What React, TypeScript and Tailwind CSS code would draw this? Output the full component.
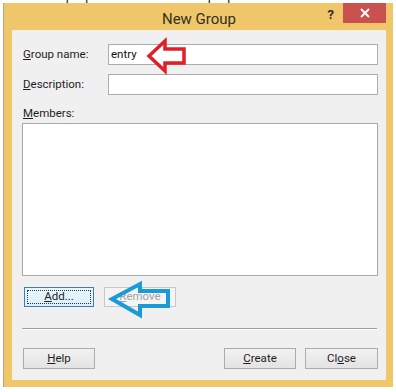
export default function App() {
	return (
		<div className="relative w-[396px] h-[392px] overflow-hidden bg-white font-['Roboto',sans-serif] text-[11.5px] text-[#1e1e1e]">
			{/* window behind, mostly hidden */}
			<div className="h-[3px] overflow-hidden pl-[30px]">
				<div className="-mt-[11px] text-[13px] leading-[14px] text-[#222] whitespace-nowrap">
					Backup Operators &nbsp;&nbsp;&nbsp;&nbsp;&nbsp;&nbsp;&nbsp;&nbsp;&nbsp;&nbsp; Backup Operators can override
				</div>
			</div>

			{/* dialog frame */}
			<div className="mx-[3px] bg-[#efc76a] pl-[8px] pr-[7px] pb-[7px] border-l border-[#b9a57a]">
				<div className="h-[27px] flex items-start">
					<div className="w-[62px]" />
					<div className="flex-1 text-center text-[15px] leading-[15px] pt-[9px] text-[#33301f]">New Group</div>
					<div className="w-[62px] flex items-start justify-end">
						<span className="mt-[5px] mr-[9px] text-[13px] font-bold text-[#2a2a2a] leading-[13px]">?</span>
						<div className="w-[43px] h-[20px] bg-[#c95150] flex items-center justify-center">
							<svg width="10" height="10" viewBox="0 0 10 10">
								<path d="M1 1L9 9M9 1L1 9" stroke="white" strokeWidth="1.8" />
							</svg>
						</div>
					</div>
				</div>

				{/* client area */}
				<div className="bg-[#f0f0f0] h-[350px] border-t border-l border-[#f7efd9] pl-[9px] pr-[8px] pt-[13px]">
					<div className="flex items-center h-[21px]">
						<label className="w-[86px] pl-px">
							<u>G</u>roup name:
						</label>
						<div className="flex-1 h-[21px] bg-white border border-[#abadb3] flex items-center pl-[2px] text-[#111]">entry</div>
					</div>
					<div className="flex items-center h-[21px] mt-[9px]">
						<label className="w-[86px] pl-px">
							<u>D</u>escription:
						</label>
						<div className="flex-1 h-[21px] bg-white border border-[#abadb3]" />
					</div>
					<div className="mt-[10px] pl-px leading-[16px]">
						<u>M</u>embers:
					</div>
					<div className="mt-[2px] h-[153px] bg-white border border-[#a8a8a8]" />

					<div className="flex gap-[10px] mt-[11px] pl-[2px]">
						<div className="w-[70px] h-[20px] border border-[#3c7fb1] bg-gradient-to-b from-[#eaf6fd] to-[#d9f0fc] p-[2px]">
							<div className="h-full border border-dotted border-[#333] flex items-center justify-center leading-none">
								<span>
									<u>A</u>dd...
								</span>
							</div>
						</div>
						<div className="w-[72px] h-[20px] border border-[#c7c7c7] bg-[#f4f4f4] flex items-center justify-center text-[#a3a3a3]">
							<span>
								<u>R</u>emove
							</span>
						</div>
					</div>

					<div className="mt-[21px] h-px bg-[#a0a0a0] mr-[1px] border-b border-white box-content" />

					<div className="flex mt-[18px] pl-px">
						<button className="w-[72px] h-[21px] border border-[#acacac] bg-gradient-to-b from-[#f2f2f2] to-[#e3e3e3]">
							<u>H</u>elp
						</button>
						<div className="flex-1" />
						<button className="w-[72px] h-[21px] border border-[#acacac] bg-gradient-to-b from-[#f2f2f2] to-[#e3e3e3]">
							<u>C</u>reate
						</button>
						<button className="ml-[9px] w-[73px] h-[21px] border border-[#acacac] bg-gradient-to-b from-[#f2f2f2] to-[#e3e3e3]">
							Cl<u>o</u>se
						</button>
					</div>
				</div>
			</div>

			{/* annotation arrows */}
			<svg className="absolute left-0 top-0" width="396" height="392" viewBox="0 0 396 392" fill="none">
				<path
					d="M149 56L165 41L165 49L184 49L184 63L165 63L165 71Z"
					fill="white"
					stroke="#e01f2b"
					strokeWidth="3.5"
					strokeLinejoin="miter"
				/>
				<path
					d="M112 299L140 284L140 291L168 291L168 306L140 306L140 315Z"
					stroke="#1a9bd7"
					strokeWidth="4"
					strokeLinejoin="miter"
				/>
			</svg>
		</div>
	);
}
